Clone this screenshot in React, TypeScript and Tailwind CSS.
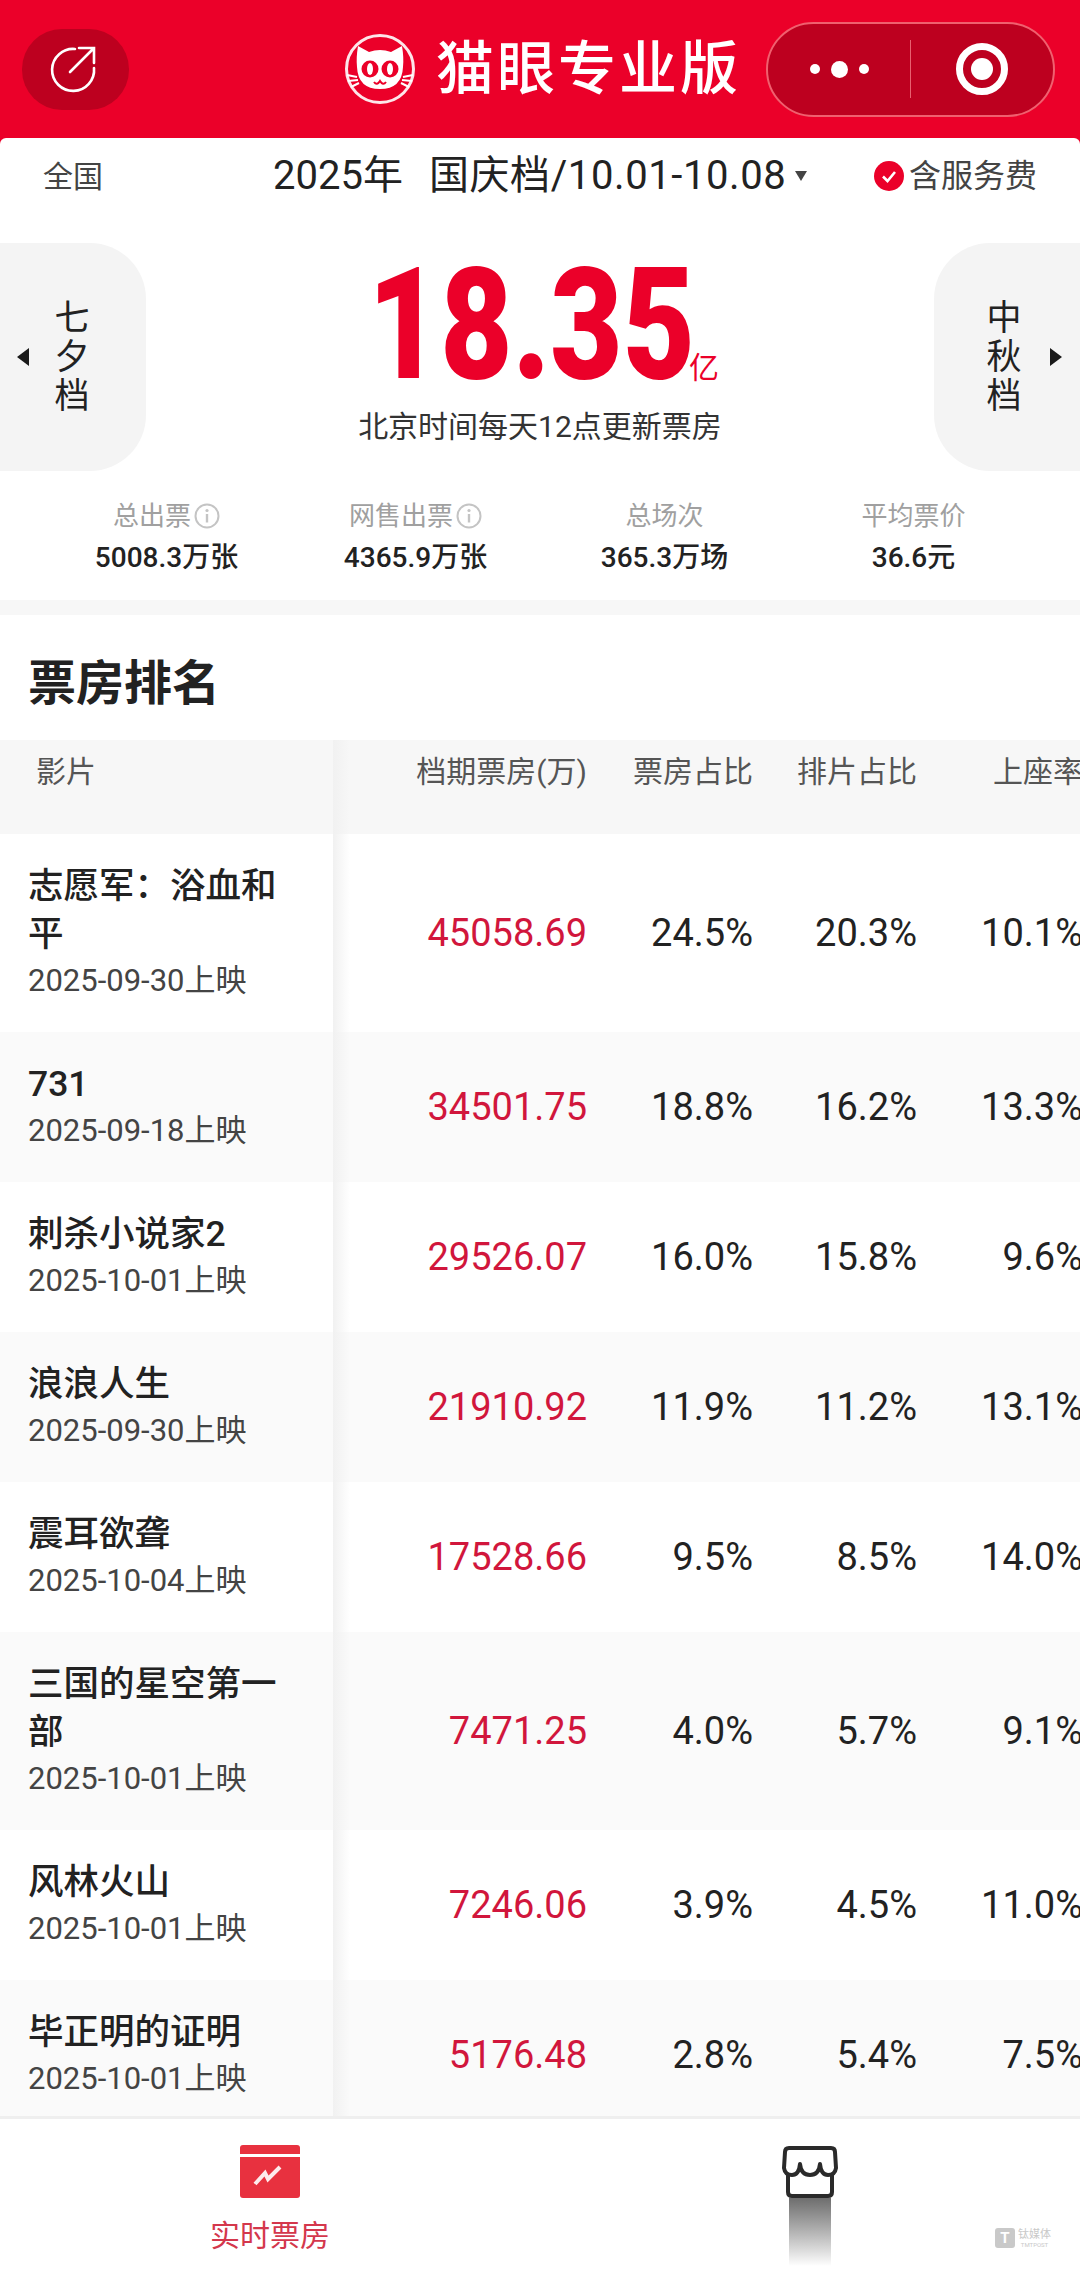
const movies = [
  { title: "志愿军：浴血和平", date: "2025-09-30上映", box: "45058.69", share: "24.5%", shows: "20.3%", seat: "10.1%" },
  { title: "731", date: "2025-09-18上映", box: "34501.75", share: "18.8%", shows: "16.2%", seat: "13.3%" },
  { title: "刺杀小说家2", date: "2025-10-01上映", box: "29526.07", share: "16.0%", shows: "15.8%", seat: "9.6%" },
  { title: "浪浪人生", date: "2025-09-30上映", box: "21910.92", share: "11.9%", shows: "11.2%", seat: "13.1%" },
  { title: "震耳欲聋", date: "2025-10-04上映", box: "17528.66", share: "9.5%", shows: "8.5%", seat: "14.0%" },
  { title: "三国的星空第一部", date: "2025-10-01上映", box: "7471.25", share: "4.0%", shows: "5.7%", seat: "9.1%" },
  { title: "风林火山", date: "2025-10-01上映", box: "7246.06", share: "3.9%", shows: "4.5%", seat: "11.0%" },
  { title: "毕正明的证明", date: "2025-10-01上映", box: "5176.48", share: "2.8%", shows: "5.4%", seat: "7.5%" },
];

const stats = [
  { label: "总出票", value: "5008.3万张", info: true },
  { label: "网售出票", value: "4365.9万张", info: true },
  { label: "总场次", value: "365.3万场", info: false },
  { label: "平均票价", value: "36.6元", info: false },
];

function CatLogo() {
  return (
    <svg width="72" height="72" viewBox="0 0 72 72" fill="none">
      <circle cx="36" cy="36" r="33.5" stroke="#fff" strokeOpacity="0.9" strokeWidth="3" />
      <path
        d="M14 13 L25 19 Q36 15 47 19 L58 13 Q60 25 59 34 Q58 56 36 56 Q14 56 13 34 Q12 25 14 13Z"
        fill="#fff"
      />
      <circle cx="26" cy="36" r="8.5" fill="#EB0029" />
      <circle cx="46" cy="36" r="8.5" fill="#EB0029" />
      <ellipse cx="26" cy="36" rx="3" ry="6" fill="#fff" />
      <ellipse cx="46" cy="36" rx="3" ry="6" fill="#fff" />
      <path d="M30 49 Q33 53 36 48 Q39 53 42 49" stroke="#EB0029" strokeWidth="2" />
      <path
        d="M3 42 L13 44 M4 48 L14 47 M7 54 L15 50 M69 42 L59 44 M68 48 L58 47 M65 54 L57 50"
        stroke="#fff"
        strokeWidth="2"
      />
    </svg>
  );
}

function Triangle({ dir }: { dir: "left" | "right" }) {
  return (
    <svg width="12" height="18" viewBox="0 0 12 18" className="shrink-0">
      <path d={dir === "left" ? "M12 0 L0 9 L12 18Z" : "M0 0 L12 9 L0 18Z"} fill="#1a1a1a" />
    </svg>
  );
}

function InfoIcon() {
  return (
    <svg width="26" height="26" viewBox="0 0 26 26" fill="none" className="ml-[3px]">
      <circle cx="13" cy="13" r="11.5" stroke="#c4c4c4" strokeWidth="2" />
      <circle cx="13" cy="7.5" r="1.6" fill="#c4c4c4" />
      <path d="M13 11 V19.5" stroke="#c4c4c4" strokeWidth="2.4" />
    </svg>
  );
}

function SideTab({ text, side }: { text: string; side: "left" | "right" }) {
  const chars = text.split("");
  const column = (
    <div className="w-[36px] flex flex-col items-center text-[35px] leading-[39px] text-[#222]">
      {chars.map((c) => (
        <span key={c}>{c}</span>
      ))}
    </div>
  );
  if (side === "left") {
    return (
      <div className="w-[146px] h-[228px] shrink-0 bg-[#f4f4f4] rounded-r-[56px] flex items-center pl-[17px]">
        <Triangle dir="left" />
        <div className="ml-[25px]">{column}</div>
      </div>
    );
  }
  return (
    <div className="w-[146px] h-[228px] shrink-0 bg-[#f4f4f4] rounded-l-[56px] flex items-center pl-[52px] pr-[18px]">
      {column}
      <div className="ml-auto">
        <Triangle dir="right" />
      </div>
    </div>
  );
}

function MovieRow({ movie, index }: { movie: (typeof movies)[number]; index: number }) {
  return (
    <div className={index % 2 === 0 ? "flex items-center bg-white" : "flex items-center bg-[#fafafa]"}>
      <div className="w-[333px] shrink-0 pl-[28px] pr-[40px] py-[28px]">
        <div className="text-[35.5px] leading-[48px] font-medium text-[#222]">{movie.title}</div>
        <div className="text-[31px] leading-[46px] text-[#444]">{movie.date}</div>
      </div>
      <div className="w-[254px] shrink-0 text-right text-[38px] text-[#d1163c]">{movie.box}</div>
      <div className="w-[166px] shrink-0 text-right text-[38px] text-[#222]">{movie.share}</div>
      <div className="w-[164px] shrink-0 text-right text-[38px] text-[#222]">{movie.shows}</div>
      <div className="w-[166px] shrink-0 text-right text-[38px] text-[#222]">{movie.seat}</div>
    </div>
  );
}

export default function App() {
  return (
    <div className="w-[1080px] h-[2269px] flex flex-col overflow-hidden bg-white [font-family:Roboto,'Noto_Sans_CJK_SC',sans-serif]">
      {/* red title bar */}
      <header className="h-[148px] shrink-0 bg-[#EB0029] pb-[10px] pl-[22px] pr-[25px] flex items-center">
        <div className="w-[107px] h-[81px] rounded-[40px] bg-[#bd001f] flex items-center justify-center">
          <svg width="50" height="50" viewBox="0 0 50 50" fill="none" stroke="#fff" strokeWidth="2.6" strokeLinecap="round" className="mr-[6px]">
            <path d="M27 5 A21 21 0 1 0 46 24" />
            <path d="M22 28 L45 5 M31 4 H46 V19" />
          </svg>
        </div>
        <div className="ml-[215px] flex items-center">
          <CatLogo />
          <span className="ml-[20px] text-[58px] leading-none font-medium text-white tracking-[3px]">猫眼专业版</span>
        </div>
        <div className="ml-auto w-[289px] h-[95px] rounded-[48px] bg-[#bd001f] border-2 border-[#f0606f] flex items-center">
          <div className="flex-1 flex items-center justify-center gap-[11px]">
            <span className="w-[10px] h-[10px] rounded-full bg-white" />
            <span className="w-[17px] h-[17px] rounded-full bg-white" />
            <span className="w-[10px] h-[10px] rounded-full bg-white" />
          </div>
          <div className="w-px h-[58px] bg-[#e8606f]" />
          <div className="flex-1 flex items-center justify-center">
            <svg width="54" height="54" viewBox="0 0 54 54" fill="none">
              <circle cx="27" cy="27" r="22.5" stroke="#fff" strokeWidth="7" />
              <circle cx="27" cy="27" r="11" fill="#fff" />
            </svg>
          </div>
        </div>
      </header>

      <main className="relative -mt-[10px] flex-1 min-h-0 overflow-hidden rounded-t-[6px] bg-white">
        {/* period selector */}
        <div className="h-[76px] pl-[43px] pr-[43px] flex items-center">
          <span className="text-[30px] text-[#444]">全国</span>
          <span className="ml-[170px] text-[40px] text-[#222]">2025年</span>
          <span className="ml-[26px] text-[40px] tracking-[0.6px] text-[#222]">国庆档/10.01-10.08</span>
          <svg width="12" height="10" viewBox="0 0 12 10" className="ml-[9px]">
            <path d="M0 0 H12 L6 10Z" fill="#444" />
          </svg>
          <div className="ml-auto flex items-center gap-[5px]">
            <svg width="30" height="30" viewBox="0 0 30 30" fill="none">
              <circle cx="15" cy="15" r="15" fill="#EB0029" />
              <path d="M9 15.5 L13.5 20 L21 11" stroke="#fff" strokeWidth="2.6" />
            </svg>
            <span className="text-[32px] text-[#444]">含服务费</span>
          </div>
        </div>

        {/* total box office */}
        <div className="mt-[29px] flex items-start">
          <SideTab text="七夕档" side="left" />
          <div className="flex-1 flex flex-col items-center">
            <div className="h-[150px] flex items-end translate-y-[7px]">
              <span className="inline-block text-[156px] leading-[150px] font-black text-[#EB0029] scale-x-[0.8] -mx-[34px]">18.35</span>
              <span className="-ml-[13px] mb-[10px] text-[30px] leading-[44px] text-[#EB0029]">亿</span>
            </div>
            <div className="mt-[14px] text-[30px] leading-[40px] text-[#333]">北京时间每天12点更新票房</div>
          </div>
          <SideTab text="中秋档" side="right" />
        </div>

        {/* stats */}
        <div className="mt-[25px] px-[42px] grid grid-cols-4">
          {stats.map((s) => (
            <div key={s.label} className="flex flex-col items-center">
              <div className="h-[40px] flex items-center text-[26px] text-[#a0a0a0]">
                {s.label}
                {s.info && <InfoIcon />}
              </div>
              <div className="h-[44px] flex items-center text-[28px] font-medium text-[#222]">{s.value}</div>
            </div>
          ))}
        </div>

        <div className="mt-[20px] h-[15px] bg-[#f7f7f7]" />

        <h2 className="h-[125px] pt-[12px] pl-[28px] flex items-center text-[48px] font-bold text-[#222]">票房排名</h2>

        {/* ranking table */}
        <div className="relative">
          <div className="h-[94px] flex items-start bg-[#f7f7f7] pt-[12px] text-[30px] leading-[40px] text-[#555]">
            <div className="w-[333px] shrink-0 pl-[36px]">影片</div>
            <div className="w-[254px] shrink-0 text-right whitespace-nowrap">档期票房(万)</div>
            <div className="w-[166px] shrink-0 text-right">票房占比</div>
            <div className="w-[164px] shrink-0 text-right">排片占比</div>
            <div className="w-[166px] shrink-0 text-right whitespace-nowrap">上座率</div>
          </div>
          {movies.map((m, i) => (
            <MovieRow key={m.title} movie={m} index={i} />
          ))}
          <div className="absolute top-0 bottom-0 left-[333px] w-[17px] bg-gradient-to-r from-[#f1f1f1] to-transparent" />
        </div>
      </main>

      {/* bottom tabs */}
      <footer className="relative h-[153px] shrink-0 bg-white border-t-[3px] border-[#efefef] grid grid-cols-2">
        <div className="flex flex-col items-center pt-[26px]">
          <svg width="62" height="54" viewBox="0 0 62 54" fill="none">
            <path d="M4 0 H58 Q61 0 61 3 V9 H1 V3 Q1 0 4 0Z" fill="#E8313F" />
            <path d="M1 12 H61 V50 Q61 53 58 53 H4 Q1 53 1 50Z" fill="#E8313F" />
            <path d="M16 39 L26 28 L29 34 L41 22" stroke="#fff" strokeWidth="4" opacity="0.9" />
          </svg>
          <span className="mt-[17px] text-[30px] leading-[40px] text-[#d4374c]">实时票房</span>
        </div>
        <div className="flex flex-col items-center pt-[27px]">
          <svg width="56" height="52" viewBox="0 0 56 52" fill="none" stroke="#2a2a2a" strokeWidth="4" strokeLinejoin="round">
            <path d="M7 2 H49 Q53 2 53 6 L54 22 Q53 29 46 29 Q39 29 38 18 Q37 29 28 29 Q19 29 18 18 Q17 29 10 29 Q3 29 2 22 L3 6 Q3 2 7 2Z" />
            <path d="M6 28 V46 Q6 50 10 50 H46 Q50 50 50 46 V28" />
          </svg>
          <div className="w-[42px] h-[68px] bg-gradient-to-b from-[#6e6e6e] to-white" />
        </div>
        <div className="absolute left-[995px] top-[109px] flex items-center gap-[3px]">
          <div className="w-[20px] h-[20px] rounded-[3px] bg-[#c9c9c9] flex items-center justify-center text-[15px] leading-none font-bold text-white">
            T
          </div>
          <div className="flex flex-col items-center text-[#c9c9c9]">
            <span className="text-[11px] leading-[12px]">钛媒体</span>
            <span className="text-[6px] leading-[7px]">TMTPOST</span>
          </div>
        </div>
      </footer>
    </div>
  );
}
